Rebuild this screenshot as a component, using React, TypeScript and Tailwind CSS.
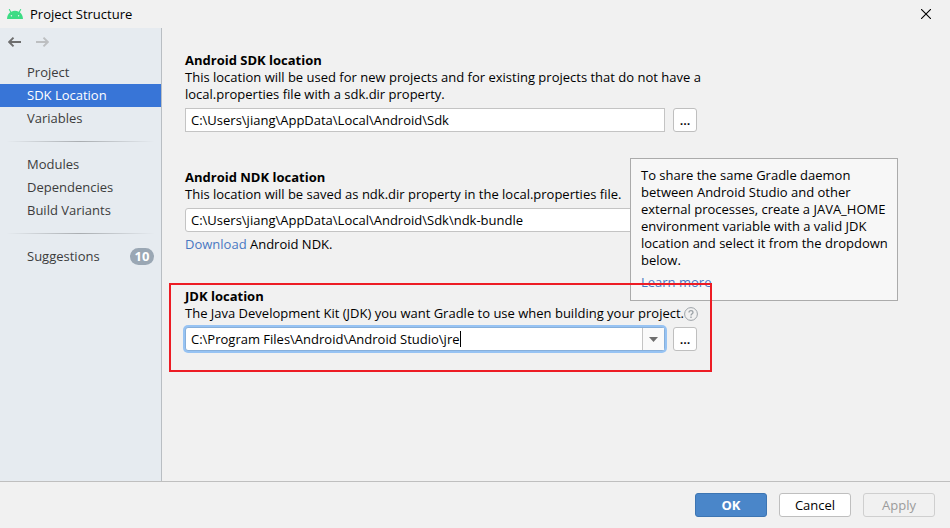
import React, { useState } from 'react';
import clsx from 'clsx';

type Page = { id: string; label: string; count?: number };

const PAGE_GROUPS: Page[][] = [
  [
    { id: 'project', label: 'Project' },
    { id: 'sdk', label: 'SDK Location' },
    { id: 'variables', label: 'Variables' },
  ],
  [
    { id: 'modules', label: 'Modules' },
    { id: 'dependencies', label: 'Dependencies' },
    { id: 'variants', label: 'Build Variants' },
  ],
  [{ id: 'suggestions', label: 'Suggestions', count: 10 }],
];

const AndroidIcon = () => (
  <svg width="16" height="10" viewBox="0 0 16 10" aria-hidden="true">
    <path d="M0 10C.2 6.900 1.300 4.700 3.200 3.300L1.900.8a.5.5 0 0 1 .9-.5L4.200 2.700a8.600 8.600 0 0 1 7.600 0L13.200.3a.5.5 0 0 1 .9.5L12.800 3.300C14.700 4.700 15.800 6.900 16 10z" fill="#3ddc84" />
    <circle cx="4.400" cy="6.700" r=".7" fill="#f1f1f1" />
    <circle cx="11.600" cy="6.700" r=".7" fill="#f1f1f1" />
  </svg>
);

const ArrowIcon = ({ className }: { className?: string }) => (
  <svg width="14" height="10" viewBox="0 0 14 10" className={className} fill="none" stroke="currentColor" aria-hidden="true">
    <path d="M1.500 5H13" strokeWidth="2" />
    <path d="M5.500 .7L1.200 5l4.300 4.300" strokeWidth="1.900" />
  </svg>
);

const HelpIcon = () => (
  <svg width="14" height="14" viewBox="0 0 14 14" fill="none" stroke="#9da3a8" aria-hidden="true">
    <circle cx="7" cy="7" r="6.400" />
    <path d="M5 5.600C5 4.400 5.800 3.600 7 3.600s2 .8 2 1.800C9 6.700 7 6.800 7 8.500" strokeWidth="1.300" />
    <path d="M7 9.600V11" strokeWidth="1.400" />
  </svg>
);

const BrowseButton = ({ label }: { label: string }) => (
  <button
    type="button"
    aria-label={label}
    className="h-6 w-6 shrink-0 rounded-[3px] border border-[#bfbfbf] bg-white font-semibold leading-5"
  >
    ...
  </button>
);

const App: React.FC = () => {
  const [page, setPage] = useState('sdk');
  const [sdkPath, setSdkPath] = useState('C:\\Users\\jiang\\AppData\\Local\\Android\\Sdk');
  const [ndkPath, setNdkPath] = useState('C:\\Users\\jiang\\AppData\\Local\\Android\\Sdk\\ndk-bundle');
  const [jdkPath, setJdkPath] = useState('C:\\Program Files\\Android\\Android Studio\\jre');

  return (
    <div className="flex min-h-screen flex-col bg-[#f1f1f1] font-['Open_Sans',sans-serif] text-[13px] leading-[17px] text-black">
      {/* Title bar */}
      <header className="flex h-7 items-center pl-[7px] pr-[19px]">
        <AndroidIcon />
        <h1 className="ml-[7px] flex-1">Project Structure</h1>
        <button type="button" aria-label="Close">
          <svg width="10" height="10" viewBox="0 0 10 10" stroke="#000" strokeWidth="1.100" aria-hidden="true">
            <path d="M0 0l10 10M10 0L0 10" />
          </svg>
        </button>
      </header>

      <div className="flex flex-1">
        {/* Sidebar */}
        <aside className="w-[162px] shrink-0 border-r border-[#b9bec3] bg-[#e6ebf0] text-[#3c3c3c]">
          <div className="flex h-[33px] items-start gap-[13px] pl-2 pt-[9px]">
            <button type="button" aria-label="Back" className="text-[#6e6e6e]">
              <ArrowIcon />
            </button>
            <button type="button" aria-label="Forward" disabled className="text-[#bdbfc1]">
              <ArrowIcon className="rotate-180" />
            </button>
          </div>
          <nav>
            {PAGE_GROUPS.map((group, i) => (
              <React.Fragment key={i}>
                {i > 0 && (
                  <div className="mx-[6px] my-[11px] h-px bg-linear-to-r from-transparent via-[#a9adb1] to-transparent" />
                )}
                {group.map((item) => (
                  <button
                    key={item.id}
                    type="button"
                    onClick={() => setPage(item.id)}
                    className={clsx(
                      'flex h-[23px] w-full items-center justify-between pl-[27px] pr-[7px] text-left',
                      page === item.id && 'bg-[#3875d7] text-white'
                    )}
                  >
                    {item.label}
                    {item.count && (
                      <span className="w-6 rounded-full bg-[#9aa7b4] text-center font-bold text-white">{item.count}</span>
                    )}
                  </button>
                ))}
              </React.Fragment>
            ))}
          </nav>
        </aside>

        {/* SDK location page */}
        <main className="flex-1 pl-[23px] pr-4 pt-6">
          <div className="max-w-[528px]">
            <section>
              <label htmlFor="sdk" className="block font-bold">Android SDK location</label>
              <p>
                This location will be used for new projects and for existing projects that do not have a
                local.properties file with a sdk.dir property.
              </p>
              <div className="mt-[5px] flex gap-2 pr-4">
                <input
                  id="sdk"
                  value={sdkPath}
                  onChange={(e) => setSdkPath(e.target.value)}
                  className="h-6 min-w-0 flex-1 border border-[#c4c4c4] bg-white px-[5px]"
                />
                <BrowseButton label="Browse for Android SDK" />
              </div>
            </section>

            <section className="mt-[37px]">
              <label htmlFor="ndk" className="block font-bold">Android NDK location</label>
              <p>This location will be saved as ndk.dir property in the local.properties file.</p>
              <div className="mt-[5px] flex pr-4">
                <input
                  id="ndk"
                  value={ndkPath}
                  onChange={(e) => setNdkPath(e.target.value)}
                  className="h-6 min-w-0 flex-1 rounded-[3px] border border-[#c4c4c4] bg-white px-[5px]"
                />
              </div>
              <p className="mt-1">
                <a href="#download" className="text-[#4a78c2]">Download</a> Android NDK.
              </p>
            </section>

            <section className="relative mt-[35px]">
              <label htmlFor="jdk" className="block font-bold">JDK location</label>
              <div className="flex items-center">
                <p>The Java Development Kit (JDK) you want Gradle to use when building your project.</p>
                <button type="button" aria-label="Help" className="shrink-0">
                  <HelpIcon />
                </button>
              </div>
              <div className="mt-[5px] flex gap-2 pr-4">
                <div className="flex h-6 min-w-0 flex-1 rounded-[3px] border border-[#87afda] bg-white ring-2 ring-[#97c3f3]">
                  <div className="flex min-w-0 flex-1 items-center pl-[5px]">
                    <input
                      id="jdk"
                      value={jdkPath}
                      onChange={(e) => setJdkPath(e.target.value)}
                      className="field-sizing-content min-w-0 outline-none"
                    />
                    <span className="h-4 w-px bg-black" />
                  </div>
                  <button
                    type="button"
                    aria-label="Show JDK locations"
                    className="flex w-[22px] items-center justify-center border-l border-[#c4c4c4] bg-[#fafafa]"
                  >
                    <svg width="9" height="5" viewBox="0 0 9 5" fill="#6e6e6e" aria-hidden="true">
                      <path d="M0 0h9L4.500 5z" />
                    </svg>
                  </button>
                </div>
                <BrowseButton label="Browse for JDK" />
              </div>

              {/* Help popup */}
              <div role="tooltip" className="absolute -top-[130px] left-[445px] w-[268px] border border-[#ababab] bg-[#f7f7f7] pb-[9px] pl-[10px] pr-1 pt-2">
                <p>
                  To share the same Gradle daemon between Android Studio and other external processes, create a
                  JAVA_HOME environment variable with a valid JDK location and select it from the dropdown below.
                </p>
                <a href="#learn-more" className="mt-[5px] block text-[#4a78c2]">Learn more</a>
              </div>

              {/* Highlight frame */}
              <div className="pointer-events-none absolute -bottom-[21px] -left-4 -top-[5px] right-px border-2 border-[#ed1c24]" />
            </section>
          </div>
        </main>
      </div>

      {/* Dialog buttons */}
      <footer className="flex justify-end gap-3 border-t border-[#bfbfbf] py-[11px] pr-[15px]">
        <button type="button" className="h-6 w-[72px] rounded-[3px] border border-[#3d75b2] bg-[#4a86c9] font-bold text-white">
          OK
        </button>
        <button type="button" className="h-6 w-[72px] rounded-[3px] border border-[#bfbfbf] bg-white">
          Cancel
        </button>
        <button type="button" disabled className="h-6 w-[72px] rounded-[3px] border border-[#cfcfcf] text-[#9b9b9b]">
          Apply
        </button>
      </footer>
    </div>
  );
};

export default App;
